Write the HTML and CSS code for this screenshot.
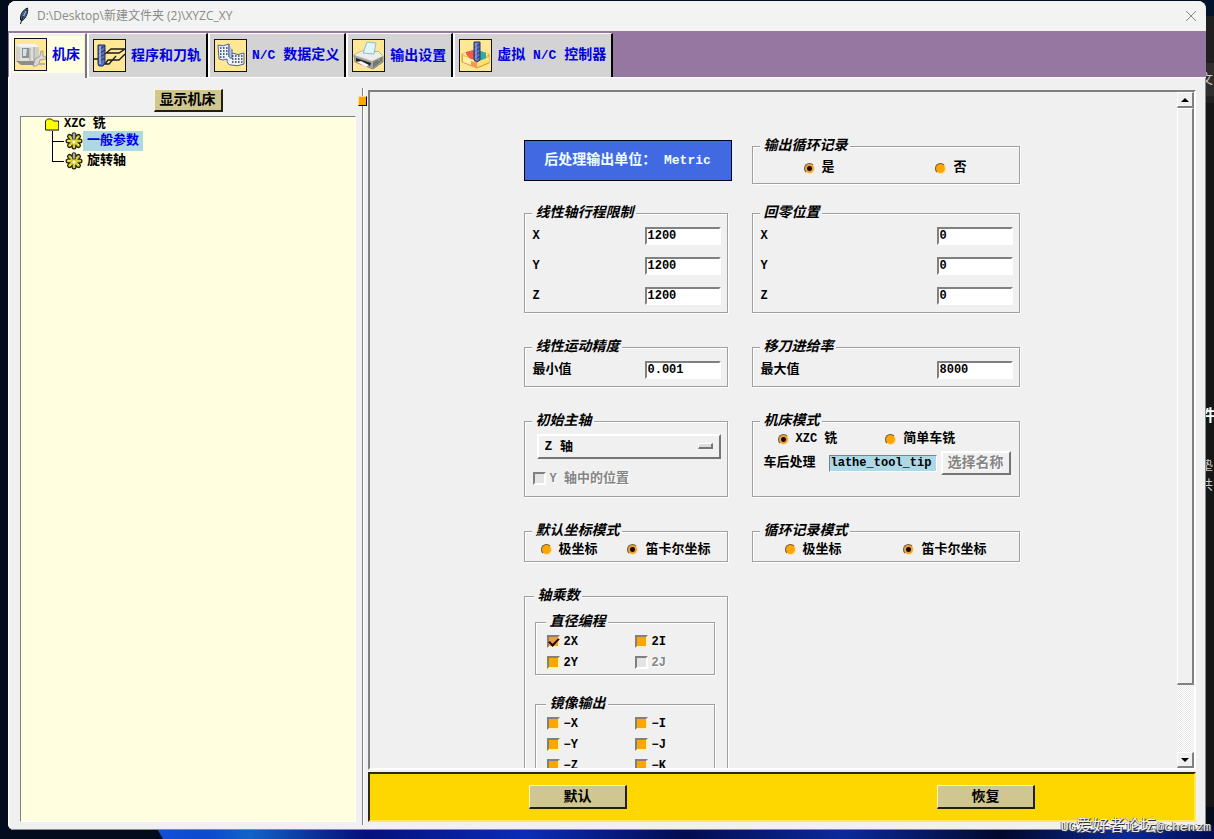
FILE: index.html
```html
<!DOCTYPE html>
<html lang="zh-CN">
<head>
<meta charset="utf-8">
<title>D:\Desktop\新建文件夹 (2)\XYZC_XY</title>
<link rel="stylesheet" href="styles.css">
</head>
<body>
<svg class="defs" width="0" height="0" aria-hidden="true">
  <symbol id="gear" viewBox="0 0 18 18">
    <g stroke="#1c1c08" stroke-width="5" stroke-linecap="round">
      <path d="M9 3v12M3 9h12M4.500 4.500l9 9M13.500 4.500l-9 9"/>
    </g>
    <g stroke="#d8cd3c" stroke-width="2.500" stroke-linecap="round">
      <path d="M9 3v12M3 9h12M4.500 4.500l9 9M13.500 4.500l-9 9"/>
    </g>
    <path d="M7.500 1h3v6h-3z" fill="#aaa" stroke="#333" stroke-width=".8"/>
    <circle cx="9" cy="10" r="1.500" fill="#ffffe0"/>
    <path d="M3 8l2 1M13 12l1 1M5 14l1-1" stroke="#fff7a0"/>
  </symbol>
</svg>

<div class="desktop" aria-hidden="true">
  <div class="glow"></div>
  <div class="backdrop">
    <span class="bit bit-a">文</span>
    <span class="bit bit-b">件</span>
    <span class="bit bit-c">垫</span>
    <span class="bit bit-d">共</span>
  </div>
</div>

<div class="window">
  <header class="titlebar">
    <svg class="feather" viewBox="0 0 12 18" aria-hidden="true">
      <path d="M9.500 1C5 3 2 7 2.500 13l2 .5C8 11 10.500 5 9.500 1z" fill="#3f6690" stroke="#101820"/>
      <path d="M8.500 3C6 7 4 11 2.500 17" stroke="#111" fill="none"/>
      <path d="M8 4L5.500 9" stroke="#bcd3e8"/>
    </svg>
    <h1>D:\Desktop\新建文件夹 (2)\XYZC_XY</h1>
    <button class="close" type="button" aria-label="关闭">
      <svg viewBox="0 0 12 12"><path d="M1 1l10 10M11 1L1 11" stroke="#8a8a8a" fill="none"/></svg>
    </button>
  </header>

  <nav class="tabs">
    <button class="tab active" type="button">
      <span class="face">
        <svg class="icon" viewBox="0 0 31 31">
          <rect width="31" height="31" fill="#ffe793"/>
          <path d="M1 7l3-2h17l3 3v13l-3 4H5l-4-3z" fill="#cfd0ca"/>
          <path d="M1 7l3-2h17l3 3H5z" fill="#f4f4ef"/>
          <path d="M5 8h14v17H5z" fill="#dfe0da"/>
          <path d="M7 9h7v10H7z" fill="#8e928f"/>
          <path d="M8 10h4l-1 7H8z" fill="#cfe3e8"/>
          <path d="M15 9v16M19 8v17" stroke="#a2a49d" fill="none"/>
          <path d="M1 22h19v4H6z" fill="#8d8e87"/>
          <path d="M20 20l5-3 1-5h2v5l3 1v2l-6 1-1 4-3 2h-3z" fill="#d7d8d2" stroke="#85867f" stroke-width=".7"/>
          <path d="M24 24h6v2h-7z" fill="#b2b3ac"/>
        </svg>
        <span>机床</span>
      </span>
    </button>
    <button class="tab" type="button">
      <svg class="icon" viewBox="0 0 31 31">
        <rect width="31" height="31" fill="#ffe793"/>
        <path d="M0 19h5M11 14l6-5h14l-6 4H13M31 14l-6 6H14l-3 4h4l7-8" stroke="#1b1b1b" stroke-width="1.300" fill="none"/>
        <path d="M4 5h7v18l-2 3H5l-1-2z" fill="#5c6fb4" stroke="#202b66"/>
        <path d="M4 10l7-4M4 14l7-4M4 18l7-4M4 22l7-4" stroke="#242f68"/>
        <path d="M6 6v18" stroke="#a7b8eb" stroke-width="1.500"/>
      </svg>
      <span>程序和刀轨</span>
    </button>
    <button class="tab" type="button">
      <svg class="icon" viewBox="0 0 31 31">
        <rect width="31" height="31" fill="#ffe793"/>
        <path d="M3 5q5 2 11-1v13l3-4q6 3 12 0v11q-6 3-13 1-4 0-4-6-4 2-8 0z" fill="#eef3fb" stroke="#4b6592"/>
        <path d="M14 4v11q0 4 3 3V9" fill="#b8c9e3" stroke="#4b6592"/>
        <path d="M5 8h8M5 11h8M5 14h8M5 17h6M17 16h11M17 19h11M17 22h11" stroke="#27334e" stroke-width="1.300" stroke-dasharray="1.500 1.500" fill="none"/>
      </svg>
      <span><span class="latin">N/C </span>数据定义</span>
    </button>
    <button class="tab" type="button">
      <svg class="icon" viewBox="0 0 31 31">
        <rect width="31" height="31" fill="#ffe793"/>
        <path d="M1 15l8-4 17 1 4 4v6l-10 7-18-7z" fill="#a7a7a2" stroke="#6d6d69" stroke-width=".7"/>
        <path d="M1 15l8-4 17 1 4 4-11 5z" fill="#ecece8"/>
        <path d="M10 13L14 2l9 1-2 11z" fill="#dff6fa" stroke="#8dbdc9"/>
        <path d="M3 18l15 5-1 3-14-5z" fill="#222"/>
        <path d="M4 22l4-1 8 4-3 2z" fill="#f9f9f9"/>
        <path d="M20 22l9-5v4l-9 7z" fill="#777773"/>
        <circle cx="26" cy="20" r="1" fill="#7ec46b"/>
      </svg>
      <span>输出设置</span>
    </button>
    <button class="tab" type="button">
      <svg class="icon" viewBox="0 0 31 31">
        <rect width="31" height="31" fill="#ffe793"/>
        <path d="M2 14l13-4 14 4v9l-12 5-15-6z" fill="#f3c648" stroke="#b6882c" stroke-width=".7"/>
        <path d="M2 14l13-4 14 4-12 6z" fill="#fff4b0"/>
        <path d="M6 12l8-2v9l-3 1-5-6z" fill="#ee5a4d"/>
        <path d="M18 10l8 3v6l-6 2-2-5z" fill="#35a99f"/>
        <path d="M3 16l11 4v6L3 22z" fill="#fff0a0"/>
        <path d="M11 21l6 2v5l-6-2z" fill="#f6984f"/>
        <path d="M17 22l12-5v5l-12 5z" fill="#fae274"/>
        <path d="M14 2h6v18l-3 2-3-2z" fill="#5a6fb9" stroke="#26336f"/>
        <path d="M14 8l6-4M14 12l6-4M14 16l6-4M14 20l6-4" stroke="#273673"/>
        <path d="M16 3v17" stroke="#a8b9ed"/>
      </svg>
      <span>虚拟<span class="latin"> N/C </span>控制器</span>
    </button>
  </nav>

  <main class="content">
    <aside class="left">
      <button class="btn khaki" type="button">显示机床</button>
      <div class="tree">
        <div class="node root">
          <svg class="folder" viewBox="0 0 14 13" aria-hidden="true"><path d="M.5 12V3l2-2h4l2 2h5v9z" fill="#ff0" stroke="#222"/><path d="M1 12.500h13V4" stroke="#777" fill="none"/></svg>
          <span><span class="latin">XZC </span>铣</span>
        </div>
        <ul>
          <li class="node"><svg class="gear" aria-hidden="true"><use href="#gear"/></svg><span class="name selected">一般参数</span></li>
          <li class="node"><svg class="gear" aria-hidden="true"><use href="#gear"/></svg><span class="name">旋转轴</span></li>
        </ul>
      </div>
    </aside>

    <div class="splitter"><span class="sash"></span></div>

    <section class="right">
      <div class="frame">
        <form class="canvas">
          <div class="pair head">
            <div class="unit">后处理输出单位：<span class="latin"> Metric</span></div>
            <fieldset class="box">
              <legend>输出循环记录</legend>
              <div class="radios wide">
                <label><input type="radio" name="cycle" checked>是</label>
                <label><input type="radio" name="cycle">否</label>
              </div>
            </fieldset>
          </div>

          <div class="pair">
            <fieldset class="box">
              <legend>线性轴行程限制</legend>
              <label class="row"><span class="latin">X</span><input class="entry" type="text" value="1200"></label>
              <label class="row"><span class="latin">Y</span><input class="entry" type="text" value="1200"></label>
              <label class="row"><span class="latin">Z</span><input class="entry" type="text" value="1200"></label>
            </fieldset>
            <fieldset class="box">
              <legend>回零位置</legend>
              <label class="row"><span class="latin">X</span><input class="entry" type="text" value="0"></label>
              <label class="row"><span class="latin">Y</span><input class="entry" type="text" value="0"></label>
              <label class="row"><span class="latin">Z</span><input class="entry" type="text" value="0"></label>
            </fieldset>

            <fieldset class="box">
              <legend>线性运动精度</legend>
              <label class="row">最小值<input class="entry" type="text" value="0.001"></label>
            </fieldset>
            <fieldset class="box">
              <legend>移刀进给率</legend>
              <label class="row">最大值<input class="entry" type="text" value="8000"></label>
            </fieldset>

            <fieldset class="box spindle">
              <legend>初始主轴</legend>
              <div class="menu">
                <select aria-label="初始主轴"><option>Z 轴</option></select>
              </div>
              <label class="check off"><input type="checkbox" disabled><span><span class="latin">Y </span>轴中的位置</span></label>
            </fieldset>
            <fieldset class="box mode">
              <legend>机床模式</legend>
              <div class="radios types">
                <label><input type="radio" name="type" checked><span><span class="latin">XZC </span>铣</span></label>
                <label><input type="radio" name="type">简单车铣</label>
              </div>
              <div class="post">
                <label for="post">车后处理</label>
                <input id="post" class="entry tip" type="text" value="lathe_tool_tip">
                <button class="btn" type="button" disabled>选择名称</button>
              </div>
            </fieldset>

            <fieldset class="box">
              <legend>默认坐标模式</legend>
              <div class="radios near">
                <label><input type="radio" name="coord">极坐标</label>
                <label><input type="radio" name="coord" checked>笛卡尔坐标</label>
              </div>
            </fieldset>
            <fieldset class="box">
              <legend>循环记录模式</legend>
              <div class="radios far">
                <label><input type="radio" name="record">极坐标</label>
                <label><input type="radio" name="record" checked>笛卡尔坐标</label>
              </div>
            </fieldset>

            <fieldset class="box outer">
              <legend>轴乘数</legend>
              <fieldset class="box inner">
                <legend>直径编程</legend>
                <div class="checks">
                  <label class="check"><input type="checkbox" checked><span class="latin">2X</span></label>
                  <label class="check"><input type="checkbox"><span class="latin">2I</span></label>
                  <label class="check"><input type="checkbox"><span class="latin">2Y</span></label>
                  <label class="check off"><input type="checkbox" disabled><span class="latin">2J</span></label>
                </div>
              </fieldset>
              <fieldset class="box inner">
                <legend>镜像输出</legend>
                <div class="checks">
                  <label class="check"><input type="checkbox"><span class="latin">−X</span></label>
                  <label class="check"><input type="checkbox"><span class="latin">−I</span></label>
                  <label class="check"><input type="checkbox"><span class="latin">−Y</span></label>
                  <label class="check"><input type="checkbox"><span class="latin">−J</span></label>
                  <label class="check"><input type="checkbox"><span class="latin">−Z</span></label>
                  <label class="check"><input type="checkbox"><span class="latin">−K</span></label>
                </div>
              </fieldset>
            </fieldset>
          </div>
        </form>
        <div class="scrollbar">
          <button class="arrow" type="button" aria-label="向上"><svg viewBox="0 0 8 4"><path d="M0 4h8L4 0z"/></svg></button>
          <div class="thumb"></div>
          <div class="trough"></div>
          <button class="arrow" type="button" aria-label="向下"><svg viewBox="0 0 8 4"><path d="M0 0h8L4 4z"/></svg></button>
        </div>
      </div>
      <footer class="actions">
        <button class="btn khaki" type="button">默认</button>
        <button class="btn khaki" type="button">恢复</button>
      </footer>
    </section>
  </main>
</div>
<div class="watermark"><span>UG</span>爱好者论坛<span>@chenzm</span></div>
</body>
</html>
```

FILE: styles.css
```css
* { box-sizing: border-box; }

body {
  margin: 0;
  height: 100vh;
  padding: 1px 8px 9px;
  position: relative;
  overflow: hidden;
  background: #020c1c;
  color: #000;
  font: bold 13px/14px "Liberation Mono", "Noto Sans CJK SC", monospace;
}

button, input, select { font: inherit; color: inherit; margin: 0; }

.latin { font-size: 12px; white-space: pre; }
.defs { position: absolute; }

/* Desktop behind the window */
.desktop { position: absolute; inset: 0; }
.glow {
  position: absolute;
  left: 155px; right: 0; bottom: 0;
  height: 14px;
  background: linear-gradient(90deg, #1250d8, #0c4ad0 5%, #1263c8 9%, #0a2a90 16%, #04107c 20%, #0a2cb8 35%, #030c50 50%, #0a2a9c 65%, #02082c 80%, #0a2a98 92%, #020a50);
  clip-path: polygon(0 0, 100% 0, 100% 100%, 8px 100%);
}
.backdrop {
  position: absolute;
  top: 0; right: 0; bottom: 32px;
  width: 12px;
  background: linear-gradient(#03132c 16px, #1f1f1f 16px, #1f1f1f 63px, #2e2e2e 63px, #2e2e2e 96px, #222 96px, #222 103px, #161616 103px);
  color: #c8c8c8;
  font-weight: normal;
}
.bit { position: absolute; left: -2px; }
.bit-a { top: 73px; }
.bit-b { top: 410px; font-size: 16px; font-weight: bold; color: #fff; }
.bit-c { top: 460px; }
.bit-d { top: 479px; }

/* Window */
.window {
  position: relative;
  height: 100%;
  display: flex;
  flex-direction: column;
  background: #f0f0f0;
  border-radius: 8px 8px 6px 6px;
  box-shadow: inset -1px -1px 0 #8a8a8a, inset 1px 0 0 #fff;
  overflow: hidden;
}
.titlebar {
  flex: none;
  height: 30px;
  display: flex;
  align-items: center;
  gap: 7px;
  padding: 0 9px 0 10px;
  background: #f3f3f3;
}
.titlebar h1 {
  flex: 1;
  margin: 0;
  color: #8a8a8a;
  font: normal 12px/16px "Open Sans", "Noto Sans CJK SC", sans-serif;
}
.feather { width: 12px; height: 18px; }
.close { width: 12px; height: 12px; padding: 0; border: 0; background: none; }
.close svg { display: block; }

/* Tabs */
.tabs {
  flex: none;
  display: flex;
  align-items: stretch;
  height: 47px;
  padding: 2px 0 0 1px;
  background: #9677a2;
  border-bottom: 1px solid #fff;
}
.tab {
  display: flex;
  align-items: center;
  gap: 5px;
  padding: 0 5px 0 4px;
  border: solid;
  border-width: 1px 2px 0;
  border-color: #fff #000 #fff #fff;
  background: #d3d3d3;
  color: #0000e0;
  font-size: 14px;
  white-space: nowrap;
}
.tab .latin { font-size: 13px; }
.tab.active {
  padding: 0 1px;
  margin-bottom: -1px;
  border-right-color: #777;
  background: #f0f0f0;
}
.face {
  display: flex;
  align-items: center;
  gap: 5px;
  margin-bottom: 3px;
  padding: 2px 4px 2px 2px;
  background: #ffffe0;
}
.icon { width: 33px; height: 33px; border: 1px solid #101028; }

/* Two panes */
.content {
  flex: 1;
  min-height: 0;
  display: flex;
  padding: 10px 10px 5px 12px;
}
.left {
  flex: none;
  width: 336px;
  display: flex;
  flex-direction: column;
  align-items: center;
  gap: 4px;
  padding: 1px 0 3px;
}
.tree {
  flex: 1;
  align-self: stretch;
  background: #ffffe0;
  border: 1px solid #808080;
  border-right-color: #fff;
  border-bottom-color: #fff;
}
.node { display: flex; align-items: center; }
.root { gap: 5px; height: 14px; padding-left: 24px; }
.folder { width: 14px; height: 13px; }
.tree ul { margin: 0 0 0 31px; padding: 0; list-style: none; }
.tree li {
  height: 20px;
  background: linear-gradient(#000, #000) 0 10px / 12px 1px no-repeat, linear-gradient(#000, #000) 0 0 / 1px 100% no-repeat;
}
.tree li:last-child { background-size: 12px 1px, 1px 11px; }
.gear { width: 18px; height: 18px; margin-left: 13px; }
.name { padding: 3px 4px; }
.selected { background: #add8e6; color: #0000e0; }

.splitter {
  flex: none;
  position: relative;
  width: 2px;
  margin: 0 4px 0 6px;
  background: linear-gradient(90deg, #808080 50%, #fff 50%);
}
.sash {
  position: absolute;
  top: 8px; left: -4px;
  width: 9px; height: 10px;
  background: #ffa500;
  border: 1px solid #ffdf9c;
  border-right-color: #000;
  border-bottom-color: #000;
}
.right {
  flex: 1;
  min-width: 0;
  display: flex;
  flex-direction: column;
  gap: 2px;
  padding: 2px 0 3px;
}
.frame {
  flex: 1;
  min-height: 0;
  display: flex;
  background: #f0f0f0;
  border: 2px solid;
  border-color: #808080 #fff #fff #808080;
}
.canvas {
  flex: 1;
  margin: 0;
  padding: 47px 4px 0 0;
  overflow: hidden;
}

/* Scroll bar */
.scrollbar { flex: none; width: 17px; display: flex; flex-direction: column; }
.arrow, .thumb {
  padding: 0;
  background: #f0f0f0;
  border: solid;
  border-width: 1px 2px 2px 1px;
  border-color: #fff #808080 #808080 #fff;
}
.arrow { flex: none; height: 16px; }
.arrow svg { display: block; width: 8px; height: 4px; margin: auto; }
.thumb { flex: 575; }
.trough { flex: 67; background: repeating-conic-gradient(#fff 0 25%, #e8e8e8 0 50%) 0 0 / 2px 2px; }

/* Groups */
.pair {
  display: grid;
  grid-template-columns: 204px 268px;
  justify-content: center;
  align-items: start;
  gap: 27px 24px;
}
.head { grid-template-columns: 208px 268px; column-gap: 20px; margin-bottom: 22px; }
.unit {
  margin-top: 1px;
  padding: 12px 0;
  border: 1px solid #000018;
  background: #4169e1;
  color: #f0ffff;
  font-size: 14px;
  text-align: center;
  white-space: nowrap;
}
.unit .latin { font-size: 13px; }
.box {
  min-width: 0;
  margin: 0;
  padding: 1px 6px 1px 8px;
  border: 1px solid #a0a0a0;
  box-shadow: 1px 1px 0 #fff, inset 1px 1px 0 #fff;
}
.box legend {
  height: 14px;
  margin-left: -1px;
  padding: 0 2px 0 4px;
  background: #f0f0f0;
  font-size: 14px;
  font-style: italic;
}
.row { display: flex; justify-content: space-between; align-items: center; height: 30px; }
.entry {
  width: 76px;
  height: 18px;
  padding: 0 1px;
  border: 2px solid;
  border-color: #808080 #fff #fff #808080;
  background: #fff;
  font-size: 12px;
}

input[type="radio"], input[type="checkbox"] { flex: none; appearance: none; background: #ffa500; }
input[type="radio"] {
  width: 11px;
  height: 11px;
  border: 1px solid;
  border-color: #6e5c3c #ffe2a0 #ffe2a0 #6e5c3c;
  border-radius: 50%;
}
input[type="radio"]:checked { background: radial-gradient(circle, #200 2px, #e8a23c 3px); }
input[type="checkbox"] {
  width: 13px;
  height: 13px;
  border: 2px solid;
  border-color: #808080 #fff0c8 #fff0c8 #808080;
}
input[type="checkbox"]:checked {
  background: #e8a23c;
  display: grid;
  place-items: center;
}
input[type="checkbox"]:checked::after {
  content: "";
  width: 8px;
  height: 4px;
  margin-bottom: 2px;
  border: solid #200;
  border-width: 0 0 2px 2px;
  transform: rotate(-45deg);
}
.off { color: #858585; text-shadow: 1px 1px 0 #fff; }
.off input[type="checkbox"] { background: #e4e4e4; border-color: #808080 #fff #fff #808080; }

.radios { display: flex; height: 24px; align-items: center; }
.radios label { display: flex; align-items: center; gap: 7px; white-space: nowrap; }
.wide { justify-content: space-between; height: 28px; padding: 0 46px 0 43px; }
.near { justify-content: space-between; height: 21px; padding: 0 10px 0 8px; }
.far { justify-content: space-between; height: 21px; padding: 0 26px 0 24px; }
.types { gap: 48px; height: 20px; padding-left: 17px; }

.menu { position: relative; margin: 5px 0 9px 4px; }
.menu select {
  display: block;
  width: 100%;
  height: 25px;
  padding: 0 6px;
  appearance: none;
  background: #f0f0f0;
  border: 2px solid;
  border-color: #fff #757575 #757575 #fff;
  border-radius: 0;
}
.menu::after {
  content: "";
  position: absolute;
  right: 8px; top: 9px;
  width: 15px; height: 6px;
  box-sizing: border-box;
  border: solid;
  border-width: 1px 2px 2px 1px;
  border-color: #fff #757575 #757575 #fff;
  background: #ddd;
  pointer-events: none;
}
.check { display: flex; align-items: center; gap: 4px; height: 21px; }
.spindle, .mode { height: 83px; }

.post { display: flex; align-items: center; gap: 4px; padding: 2px 2px 0 3px; white-space: nowrap; }
.entry.tip {
  flex: 1;
  min-width: 0;
  height: 17px;
  margin-left: 9px;
  border-width: 1px;
  background: #add8e6;
}

.outer { padding: 12px 12px 12px 10px; }
.outer .inner { padding: 2px 4px 1px 11px; }
.inner + .inner { margin-top: 22px; }
.checks { display: grid; grid-template-columns: 88px 1fr; }

/* Buttons */
.btn {
  height: 24px;
  padding: 0 5px;
  border: 2px solid;
  border-color: #fff #757575 #757575 #fff;
  background: #f0f0f0;
  font-size: 14px;
  line-height: 14px;
}
.btn:disabled { color: #858585; text-shadow: 1px 1px 0 #fff; }
.khaki {
  padding: 0 4px;
  background: #d0c690;
  border-width: 1px 2px 2px 1px;
  border-color: #fff8c0 #202010 #202010 #fff8c0;
}
.left .btn { height: 23px; padding: 0 5px; }

.actions {
  flex: none;
  display: flex;
  justify-content: center;
  align-items: center;
  gap: 310px;
  height: 50px;
  background: #ffd700;
  border: 2px solid;
  border-color: #302810 #ffe95e #ffe95e #302810;
}
.actions .btn { width: 98px; }

.watermark {
  position: absolute;
  right: 3px;
  bottom: 2px;
  color: #eee;
  font: normal 16px/18px "Liberation Mono", "Noto Sans CJK SC", monospace;
  text-shadow: 1px 1px 0 #333, -1px 0 0 #777;
}
.watermark span { font-size: 13px; }
```
